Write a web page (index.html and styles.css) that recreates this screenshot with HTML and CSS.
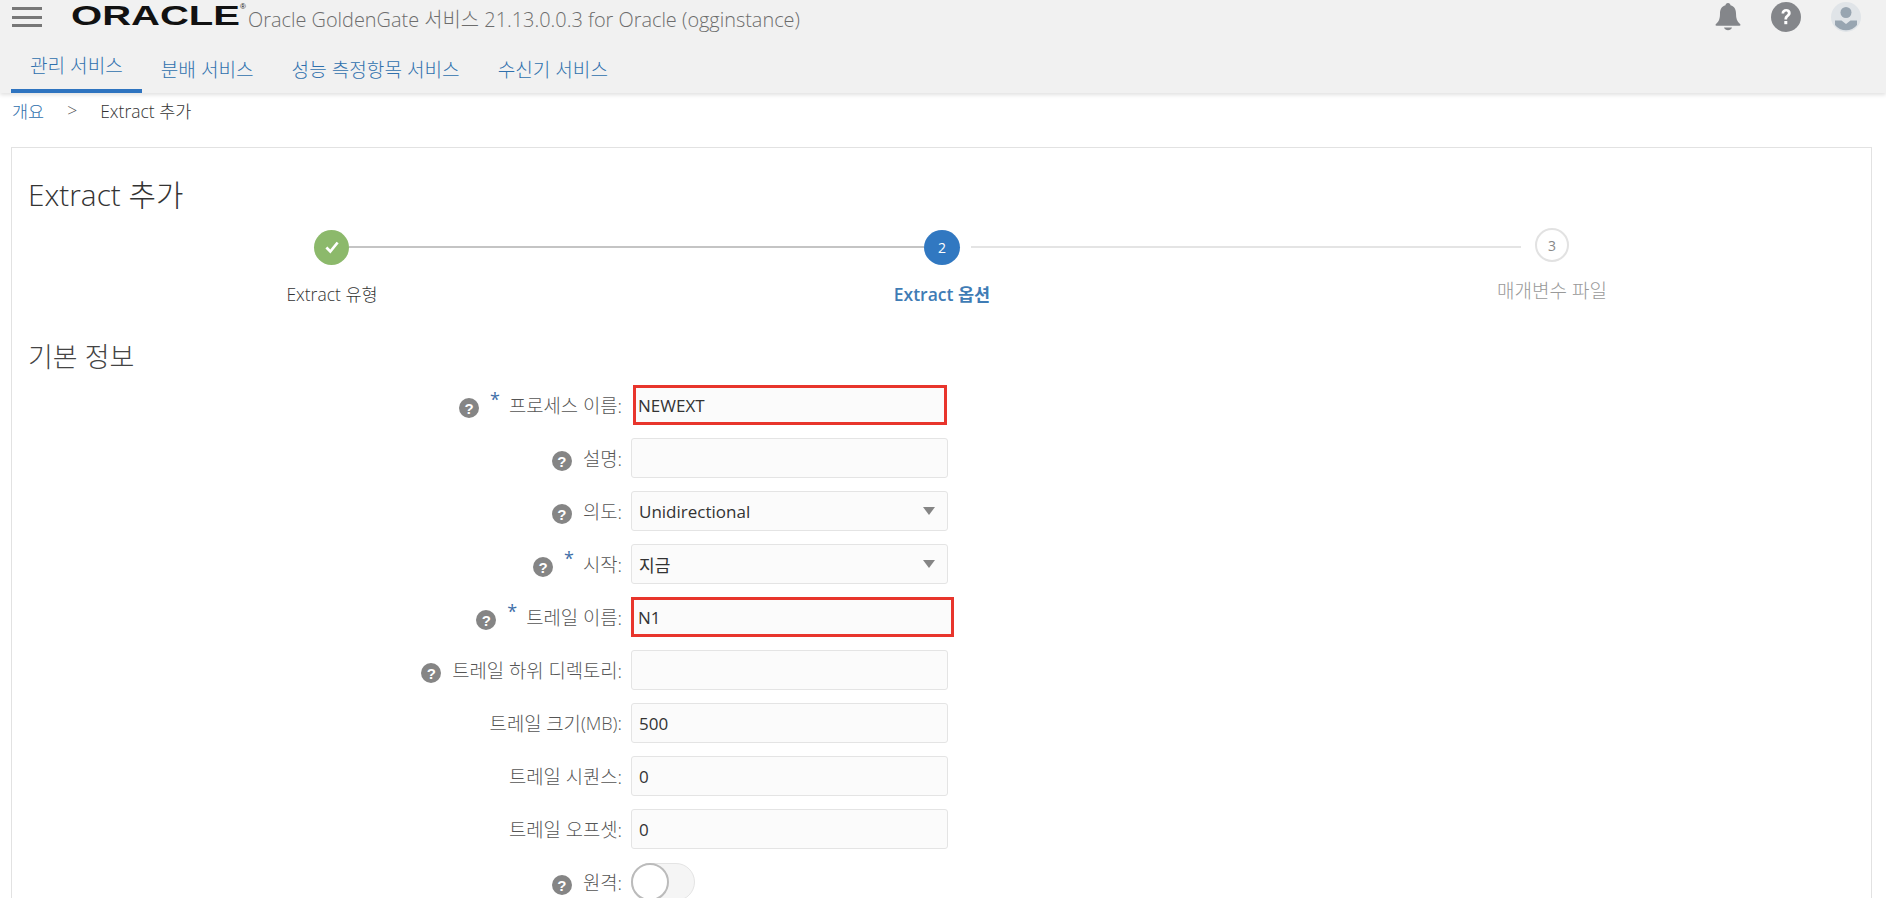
FILE: index.html
```html
<!DOCTYPE html>
<html lang="ko">
<head>
  <meta charset="UTF-8">
  <link rel="stylesheet" href="styles.css">
</head>
<body>
  <header class="header">
    <div class="top-bar">
      <div class="hamburger"><span></span><span></span><span></span></div>
      <svg class="logo" viewBox="0 0 177 30"><text class="logo-text" x="0" y="25" textLength="169" lengthAdjust="spacingAndGlyphs">ORACLE</text><text class="logo-mark" x="169" y="9">®</text></svg>
      <div class="app-title">Oracle GoldenGate 서비스 21.13.0.0.3 for Oracle (ogginstance)</div>
      <div class="top-icons">
        <svg class="icon-bell" viewBox="0 0 26 28"><path d="M13 0c1.500 0 2.500 1 2.500 2.300C19.500 3.400 21 6.500 21 10.500c0 5 1 8 4 10.500.8.700.6 1.800-.6 1.800H1.600C.4 22.800.2 21.700 1 21c3-2.500 4-5.500 4-10.500 0-4 1.500-7.100 5.500-8.200C10.500 1 11.500 0 13 0z" fill="#84868a"/><path d="M9 24.500h8c-.6 1.700-2.200 2.800-4 2.800s-3.400-1.100-4-2.800z" fill="#84868a"/></svg>
        <svg class="icon-round" viewBox="0 0 30 30"><circle cx="15" cy="15" r="15" fill="#84868a"/><path d="M10.500 11.500c0-2.800 2-4.500 4.700-4.500 2.600 0 4.500 1.500 4.500 3.900 0 3.500-3.600 3.400-3.600 6.500h-2.700c0-4.200 3.400-4.100 3.400-6.300 0-1-.7-1.600-1.700-1.600-1.100 0-1.800.8-1.900 2z" fill="#fff"/><rect x="13.300" y="19" width="3" height="3.200" fill="#fff"/></svg>
        <svg class="icon-round" viewBox="0 0 30 30"><circle cx="15" cy="15" r="15" fill="#e0e4e8"/><circle cx="15" cy="10.500" r="5.500" fill="#98a5b1"/><path d="M4 18.500h6.500l4.500 3.500 4.500-3.500H26v4.500a14 14 0 0 1-22 0z" fill="#98a5b1"/></svg>
      </div>
    </div>
    <nav class="tabs">
      <a class="tab active">관리 서비스</a>
      <a class="tab">분배 서비스</a>
      <a class="tab">성능 측정항목 서비스</a>
      <a class="tab">수신기 서비스</a>
    </nav>
  </header>

  <div class="breadcrumb">
    <a>개요</a><span class="crumb-sep">&gt;</span><span>Extract 추가</span>
  </div>

  <main class="card">
    <h1 class="page-title">Extract 추가</h1>

    <div class="stepper">
      <div class="step-dot done">
        <svg viewBox="0 0 16 16" width="18" height="18"><path d="M3 8.500l3.500 3.500L13 4" fill="none" stroke="#fff" stroke-width="2.400"/></svg>
      </div>
      <div class="step-line line-done"></div>
      <div class="step-dot current">2</div>
      <div class="step-line line-todo"></div>
      <div class="step-dot todo">3</div>
    </div>
    <div class="step-labels">
      <div class="step-label">Extract 유형</div>
      <div class="step-label label-current">Extract 옵션</div>
      <div class="step-label label-todo">매개변수 파일</div>
    </div>

    <h2 class="section-title">기본 정보</h2>

    <form class="form">
      <div class="row">
        <label class="field-label"><i class="help">?</i><b class="req">*</b>프로세스 이름:</label>
        <input class="field field-mark first-mark" type="text" value="NEWEXT">
      </div>
      <div class="row">
        <label class="field-label"><i class="help">?</i>설명:</label>
        <input class="field" type="text">
      </div>
      <div class="row">
        <label class="field-label"><i class="help">?</i>의도:</label>
        <div class="select-box"><span>Unidirectional</span></div>
      </div>
      <div class="row">
        <label class="field-label"><i class="help">?</i><b class="req">*</b>시작:</label>
        <div class="select-box"><span>지금</span></div>
      </div>
      <div class="row">
        <label class="field-label"><i class="help">?</i><b class="req">*</b>트레일 이름:</label>
        <input class="field field-mark second-mark" type="text" value="N1">
      </div>
      <div class="row">
        <label class="field-label"><i class="help">?</i>트레일 하위 디렉토리:</label>
        <input class="field" type="text">
      </div>
      <div class="row">
        <label class="field-label">트레일 크기<small class="unit">(MB)</small>:</label>
        <input class="field" type="text" value="500">
      </div>
      <div class="row">
        <label class="field-label">트레일 시퀀스:</label>
        <input class="field" type="text" value="0">
      </div>
      <div class="row">
        <label class="field-label">트레일 오프셋:</label>
        <input class="field" type="text" value="0">
      </div>
      <div class="row">
        <label class="field-label"><i class="help">?</i>원격:</label>
        <div class="toggle"><div class="knob"></div></div>
      </div>
    </form>
  </main>
</body>
</html>
```

FILE: styles.css
```css
html, body {
  height: 898px;
  overflow: hidden;
}
body {
  margin: 0;
  background: #fff;
  color: #333;
  font-family: "Open Sans", "Noto Sans CJK KR", sans-serif;
  font-size: 16px;
}
.header {
  height: 93px;
  background: #f1f1f1;
  box-shadow: 0 2px 4px rgba(0, 0, 0, 0.12);
}
.top-bar {
  display: flex;
  align-items: center;
  height: 34px;
  padding-left: 12px;
}
.hamburger {
  display: flex;
  flex-direction: column;
  justify-content: space-between;
  width: 30px;
  height: 20px;
  margin-right: 29px;
}
.hamburger span {
  height: 3px;
  background: #777;
}
.logo {
  flex: none;
  width: 177px;
  height: 30px;
  margin-top: -4px;
}
.logo-text {
  fill: #111;
  font-family: "Liberation Sans", sans-serif;
  font-size: 28px;
  font-weight: 700;
}
.logo-mark {
  fill: #111;
  font-family: "Liberation Sans", sans-serif;
  font-size: 8px;
}
.app-title {
  color: #6d6d6d;
  font-size: 19.900px;
  font-weight: 300;
  white-space: nowrap;
  margin-top: 2px;
}
.top-icons {
  display: flex;
  align-items: center;
  gap: 30px;
  margin-left: auto;
  padding-right: 25px;
}
.icon-bell {
  width: 26px;
  height: 28px;
}
.icon-round {
  width: 30px;
  height: 30px;
}
.tabs {
  display: flex;
  height: 59px;
  padding-left: 11px;
  box-sizing: border-box;
}
.tab {
  display: flex;
  align-items: center;
  box-sizing: border-box;
  height: 59px;
  padding: 10px 19px 0;
  color: #2f70ad;
  font-size: 19.100px;
  font-weight: 300;
}
.tab.active {
  border-bottom: 4px solid #2f74c0;
  padding-top: 6px;
}
.breadcrumb {
  display: flex;
  align-items: center;
  height: 34px;
  padding-left: 12px;
  font-size: 17.500px;
  font-weight: 300;
}
.breadcrumb a {
  color: #2f70ad;
}
.crumb-sep {
  margin: 0 23px;
  color: #555;
}
.card {
  box-sizing: border-box;
  height: 800px;
  margin: 20px 14px 0 11px;
  padding: 27px 16px 0;
  border: 1px solid #e2e2e2;
}
.page-title {
  margin: 0;
  font-size: 29.800px;
  font-weight: 300;
  line-height: 40px;
  color: #333;
}
.stepper {
  display: flex;
  align-items: center;
  height: 36px;
  margin-top: 14px;
  padding-left: 286px;
}
.step-dot {
  display: flex;
  align-items: center;
  justify-content: center;
  flex: none;
  box-sizing: border-box;
  width: 35px;
  height: 35px;
  border-radius: 50%;
  font-size: 14px;
}
.step-dot.done {
  background: #8cb96b;
}
.step-dot.current {
  width: 36px;
  background: #3178c1;
  color: #fff;
}
.step-dot.todo {
  width: 34px;
  height: 34px;
  margin-top: -4px;
  border: 2px solid #e2e2e2;
  color: #888;
}
.step-line {
  height: 2px;
}
.line-done {
  width: 575px;
  background: #c4c4c4;
}
.line-todo {
  width: 550px;
  margin: 0 14px 0 11px;
  background: #e4e4e4;
}
.step-labels {
  display: flex;
  gap: 410px;
  margin-top: 17px;
  padding-left: 204px;
}
.step-label {
  width: 200px;
  text-align: center;
  font-size: 17.500px;
  font-weight: 300;
  line-height: 24px;
}
.label-current {
  color: #3f7cb5;
  font-weight: 600;
}
.label-todo {
  margin-top: -3px;
  color: #999;
  font-size: 19px;
}
.section-title {
  margin: 33px 0 0;
  font-size: 27px;
  font-weight: 300;
  line-height: 36px;
  color: #444;
}
.form {
  display: flex;
  flex-direction: column;
  gap: 13px;
  margin-top: 10px;
}
.row {
  display: flex;
  align-items: flex-start;
  height: 40px;
}
.field-label {
  display: flex;
  align-items: center;
  justify-content: flex-end;
  flex: none;
  box-sizing: border-box;
  width: 594px;
  height: 40px;
  color: #555;
  font-size: 18.800px;
  font-weight: 300;
}
.help {
  display: flex;
  align-items: center;
  justify-content: center;
  width: 20px;
  height: 20px;
  margin: 6px 11px 0 0;
  border-radius: 50%;
  background: #858585;
  color: #fff;
  font-family: "Liberation Sans", sans-serif;
  font-size: 15px;
  font-style: normal;
  font-weight: 700;
}
.req {
  margin: -12px 9px 0 0;
  color: #3f6fa8;
  font-size: 18px;
  font-weight: 400;
}
.unit {
  font-size: 18px;
}
.field {
  box-sizing: border-box;
  width: 317px;
  height: 40px;
  margin-left: 9px;
  padding: 0 7px;
  border: 1px solid #e4e4e4;
  border-radius: 3px;
  background: #fbfbfb;
  color: #333;
  font-family: inherit;
  font-size: 17px;
}
.field-mark {
  border: 3px solid #e8352c;
  border-radius: 0;
  padding: 0 4px;
}
.first-mark {
  width: 314px;
  margin-left: 11px;
  padding-left: 2px;
}
.second-mark {
  width: 323px;
}
.select-box {
  position: relative;
  display: flex;
  align-items: center;
  box-sizing: border-box;
  width: 317px;
  height: 40px;
  margin-left: 9px;
  padding: 0 7px;
  border: 1px solid #e4e4e4;
  border-radius: 3px;
  background: #fbfbfb;
  font-size: 17px;
}
.select-box::after {
  content: "";
  position: absolute;
  right: 12px;
  top: 15px;
  border-left: 6px solid transparent;
  border-right: 6px solid transparent;
  border-top: 8px solid #858585;
}
.toggle {
  box-sizing: border-box;
  width: 64px;
  height: 38px;
  margin: 1px 0 0 9px;
  border: 1px solid #e4e4e4;
  border-radius: 19px;
  background: #f5f5f5;
}
.knob {
  box-sizing: border-box;
  width: 38px;
  height: 38px;
  margin: -1px 0 0 -1px;
  border: 2px solid #bbb;
  border-radius: 50%;
  background: #fff;
}
```
